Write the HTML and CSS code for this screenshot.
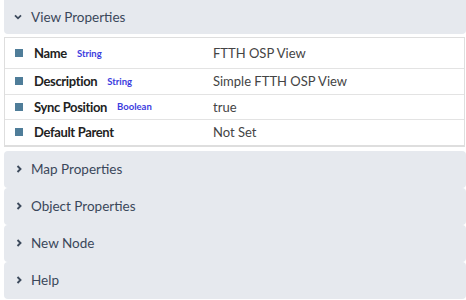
FILE: index.html
```html
<!DOCTYPE html>
<html>
<head>
<meta charset="utf-8">
<link rel="stylesheet" href="styles.css">
</head>
<body>
<div class="wrap">
  <div class="panel open">
    <div class="head">
      <svg class="chev" width="8" height="6" viewBox="0 0 8 6"><path d="M1 1.3 L4 4.3 L7 1.3" fill="none" stroke="#3d4a5c" stroke-width="1.8"/></svg>
      <span>View Properties</span>
    </div>
  </div>
  <div class="props">
    <div class="row first">
      <div class="key"><i class="sq"></i><b>Name</b><em>String</em></div>
      <div class="val">FTTH OSP View</div>
    </div>
    <div class="row">
      <div class="key"><i class="sq"></i><b>Description</b><em>String</em></div>
      <div class="val">Simple FTTH OSP View</div>
    </div>
    <div class="row">
      <div class="key"><i class="sq"></i><b>Sync Position</b><em>Boolean</em></div>
      <div class="val">true</div>
    </div>
    <div class="row">
      <div class="key"><i class="sq"></i><b>Default Parent</b></div>
      <div class="val">Not Set</div>
    </div>
  </div>
  <div class="stack">
    <div class="panel"><div class="head closed"><svg class="chev" width="6" height="8" viewBox="0 0 6 8"><path d="M1.5 1 L4.5 4 L1.5 7" fill="none" stroke="#3d4a5c" stroke-width="1.9"/></svg><span>Map Properties</span></div></div>
    <div class="panel"><div class="head closed"><svg class="chev" width="6" height="8" viewBox="0 0 6 8"><path d="M1.5 1 L4.5 4 L1.5 7" fill="none" stroke="#3d4a5c" stroke-width="1.9"/></svg><span>Object Properties</span></div></div>
    <div class="panel"><div class="head closed"><svg class="chev" width="6" height="8" viewBox="0 0 6 8"><path d="M1.5 1 L4.5 4 L1.5 7" fill="none" stroke="#3d4a5c" stroke-width="1.9"/></svg><span>New Node</span></div></div>
    <div class="panel"><div class="head closed"><svg class="chev" width="6" height="8" viewBox="0 0 6 8"><path d="M1.5 1 L4.5 4 L1.5 7" fill="none" stroke="#3d4a5c" stroke-width="1.9"/></svg><span>Help</span></div></div>
  </div>
</div>
</body>
</html>
```
FILE: styles.css
```css
html, body { margin: 0; padding: 0; background: #fff; }
body { font-family: Lato, "Open Sans", sans-serif; font-size: 13px; color: #333; width: 466px; height: 300px; overflow: hidden; }
.wrap { padding-left: 4px; width: 462px; }
.panel { background: #e6e9ee; border-radius: 0 0 4px 4px; }
.stack .panel { border-radius: 4px; }
.head { height: 34px; display: flex; align-items: center; color: #3a475a; font-size: 13.5px; }
.head .chev { margin-left: 10px; margin-right: 9px; }
.head.closed { height: 37px; }
.head.closed .chev { margin-left: 12px; margin-right: 9px; }
.props { margin-top: 3px; border: 1px solid #dedede; border-width: 1.5px 1px 2px 1px; margin-right: 1px; }
.row { display: flex; align-items: center; height: 24.5px; border-top: 1px solid #e3e3e3; }
.row.first { height: 30px; border-top: none; }
.key { width: 208px; display: flex; align-items: center; }
.sq { display: inline-block; width: 8px; height: 8px; background: #4f7d99; margin-left: 10px; margin-right: 11px; }
.key b { font-weight: 700; color: #222; font-size: 13px; letter-spacing: -0.35px; }
.key em { font-style: normal; color: #3c3ce0; font-size: 9.5px; font-weight: 700; margin-left: 10px; }
.val { color: #444; font-size: 13px; }
.stack { margin-top: 4px; }
```
